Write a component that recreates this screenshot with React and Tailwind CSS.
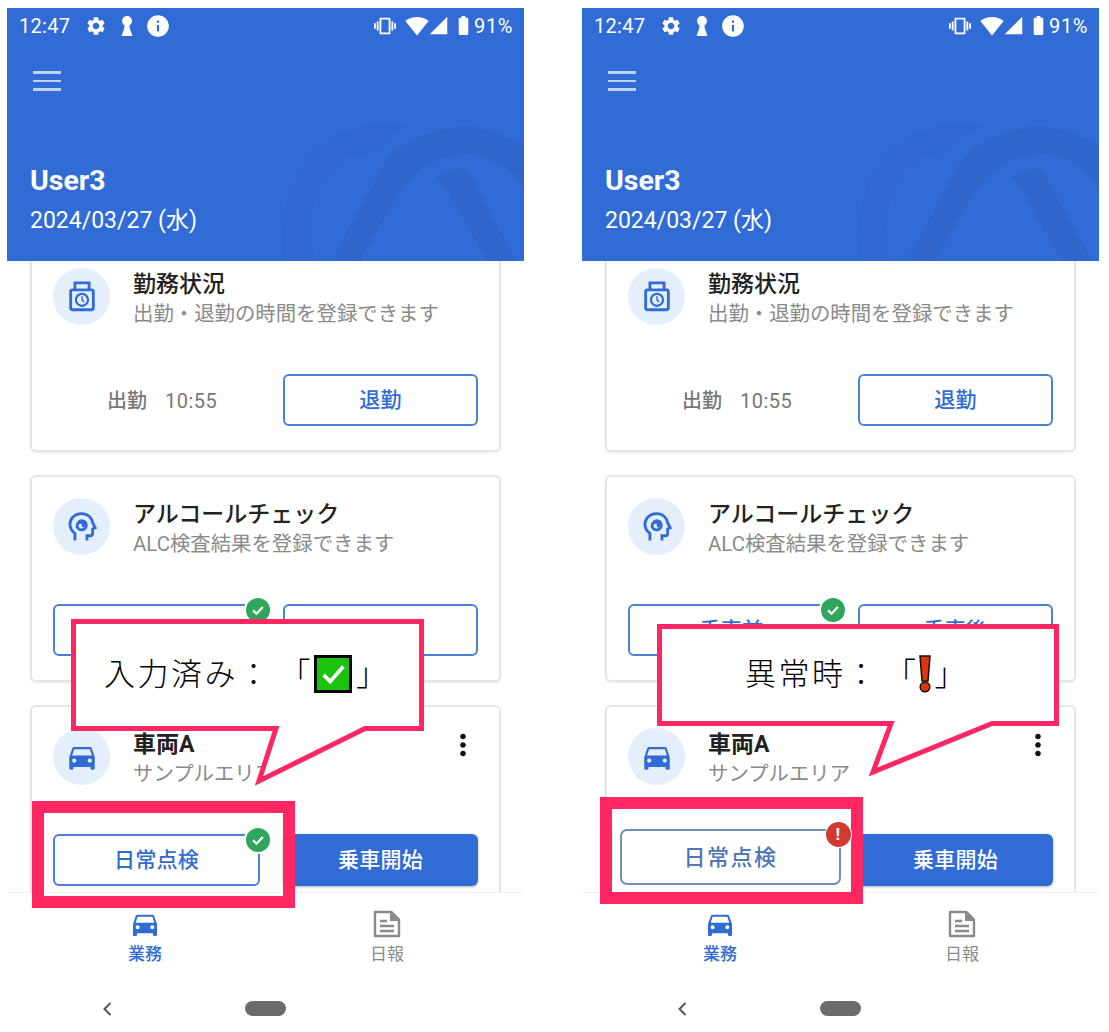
import {
  MdSettings,
  MdInfo,
  MdVibration,
  MdSignalWifi4Bar,
  MdSignalCellular4Bar,
  MdBatteryFull,
  MdDirectionsCar,
  MdMoreVert,
  MdOutlinePunchClock,
} from "react-icons/md";

const fontStack = "font-['Roboto','Noto_Sans_CJK_JP',sans-serif]";

const Keyhole = () => (
  <svg viewBox="0 0 12 22" className="w-[12px] h-[22px] fill-white">
    <circle cx="6" cy="6" r="5" />
    <path d="M4 8h4l1 6 2.5 7H.5L3 14z" />
  </svg>
);

const NoteIcon = () => (
  <svg viewBox="0 0 28 28" className="w-[28px] h-[28px]">
    <path d="M2 2h16l8 8v16H2z" fill="none" stroke="#8a8a8a" strokeWidth="2.4" strokeLinejoin="round" />
    <path d="M17 1h2l8 8v2H17z" fill="#8a8a8a" />
    <path d="M7 11h7M7 16h14M7 21h14" stroke="#8a8a8a" strokeWidth="2.4" />
  </svg>
);

const HeadIcon = () => (
  <svg viewBox="0 0 24 24" className="w-[34px] h-[34px] fill-none stroke-current stroke-[2]">
    <path d="M7 21.5v-5C5 15 3.5 12.5 3.5 10 3.5 5.5 7.5 2.5 11.5 2.5c4.5 0 7.5 3 8 6.5l1.8 3.5-1.8.8v3.2c0 1-.8 1.7-1.7 1.7h-2.3v3.3" />
    <path d="M9.5 8.5c2-1.8 5.5-.8 5.5 2.3s-4 4.2-5.7 2.2-.5-4.3 1.7-4.3 2.7 2.2 1 2.8" />
  </svg>
);

const Watermark = () => (
  <svg viewBox="0 0 517 253" className="absolute inset-0 w-[517px] h-[253px]">
    <path d="M277 253C268 200 292 122 367 117C380 116 392 117 401 119L383 128C372 139 365 146 358 146C318 150 296 190 308 253Z" fill="#3069d2" />
    <path d="M328 246L377 156C400 128 430 119 459 119C480 119 500 127 517 139V179C500 155 480 147 459 147C430 147 410 160 394 182L353 253H332Z" fill="#2e66cc" />
    <path d="M428 169C438 163 448 161 455 161C459 161 461 164 464 168L510 253H479L442 184Z" fill="#2e66cc" />
  </svg>
);

const IconCircle = ({ children }) => (
  <div className="w-[57px] h-[57px] rounded-full bg-[#e5effb] flex items-center justify-center shrink-0 text-[#316cd6]">
    {children}
  </div>
);

const Badge = () => (
  <div className="absolute -right-[14px] -top-[10px] w-[28px] h-[28px] rounded-full bg-white flex items-center justify-center">
    <div className="w-[24px] h-[24px] rounded-full bg-[#2fa65c] flex items-center justify-center">
      <svg viewBox="0 0 24 24" className="w-[18px] h-[18px] fill-none stroke-white stroke-[3]">
        <path d="M5.5 12.5l4.5 4.5 8.5-9" />
      </svg>
    </div>
  </div>
);

const OutlineButton = ({ label, checked, width }) => (
  <button className={`relative h-[52px] pt-[2px] ${width} rounded-[6px] border-2 border-[#4a7fdc] bg-white text-[#316cd6] text-[21px] font-medium tracking-[0.3px] flex items-center justify-center`}>
    {label}
    {checked && <Badge />}
  </button>
);

const Card = ({ icon, title, subtitle, more, children, boldTitle }) => (
  <div className="relative h-[207px] rounded-[6px] border-2 border-[#e6e6e6] bg-white pt-[21px] px-[21px] shadow-[0_1px_2px_rgba(0,0,0,0.08)]">
    <div className="flex">
      <IconCircle>{icon}</IconCircle>
      <div className="ml-[23px] pt-[2px]">
        <div className={`text-[23px] leading-[29px] text-[#222] ${boldTitle ? "font-bold text-[22px]" : "font-medium"}`}>{title}</div>
        <div className="text-[20.4px] leading-[30px] text-[#8a8a8a]">{subtitle}</div>
      </div>
      {more && (
        <div className="ml-auto mr-[-2px] mt-[0px] text-[#111]">
          <MdMoreVert className="w-[34px] h-[34px]" />
        </div>
      )}
    </div>
    <div className="flex gap-[23px] mt-[45px]">{children}</div>
  </div>
);

const StatusBar = () => (
  <div className="flex items-center h-[35px] pl-[12px] pr-[11px] text-white">
    <span className="text-[20px] tracking-[0.3px] w-[66px]">12:47</span>
    <MdSettings className="w-[22px] h-[22px]" />
    <div className="ml-[14px] flex"><Keyhole /></div>
    <MdInfo className="ml-[12px] w-[26px] h-[26px]" />
    <div className="ml-auto flex items-center">
      <MdVibration className="w-[22px] h-[22px]" />
      <MdSignalWifi4Bar className="ml-[9px] w-[24px] h-[24px]" />
      <MdSignalCellular4Bar className="ml-[-1px] w-[21px] h-[21px]" />
      <MdBatteryFull className="ml-[3px] w-[23px] h-[23px]" />
      <span className="ml-[-1px] text-[20px] tracking-[0.6px]">91%</span>
    </div>
  </div>
);

const Header = () => (
  <header className="relative h-[253px] bg-[#316cd6] overflow-hidden shrink-0">
    <Watermark />
    <div className="relative">
      <StatusBar />
      <div className="pl-[26px] pt-[28px] h-[120px]">
        <div className="flex flex-col gap-[6px] w-[28px]">
          <div className="h-[2.5px] bg-white/70" />
          <div className="h-[2.5px] bg-white/70" />
          <div className="h-[2.5px] bg-white/70" />
        </div>
      </div>
      <div className="pl-[23px] text-white">
        <div className="text-[28.5px] leading-[36px] font-bold">User3</div>
        <div className="text-[23px] leading-[30px] mt-[7px]">2024/03/27 (水)</div>
      </div>
    </div>
  </header>
);

const BottomNav = () => (
  <nav className="h-[93px] shrink-0 border-t border-[#f0f0f0] bg-white flex">
    <div className="w-[276px] flex flex-col items-center pt-[15px] text-[#316cd6]">
      <MdDirectionsCar className="w-[32px] h-[32px]" />
      <span className="text-[17px] leading-[24px] mt-[2px] font-medium">業務</span>
    </div>
    <div className="flex-1 flex flex-col items-center pt-[17px] pr-[33px] text-[#8a8a8a]">
      <NoteIcon />
      <span className="text-[17px] leading-[24px] mt-[4px]">日報</span>
    </div>
  </nav>
);

const SystemNav = () => (
  <div className="flex-1 relative flex items-start bg-white pt-[16px]">
    <svg viewBox="0 0 12 16" className="ml-[94px] mt-[0px] w-[12px] h-[16px] fill-none stroke-[#555] stroke-2">
      <path d="M9.5 2L3.5 8l6 6" />
    </svg>
    <div className="ml-[132px] w-[41px] h-[15px] rounded-full bg-[#6b6b6b]" />
  </div>
);

const Phone = ({ inspectLabel = "日常点検", children }) => (
  <div className="relative w-[517px] h-[1024px] flex flex-col">
    <Header />
    <main className="h-[631px] overflow-hidden bg-white px-[23px] shrink-0">
      <div className="-mt-[16px] flex flex-col gap-[23px]">
        <Card
          icon={<MdOutlinePunchClock className="w-[34px] h-[34px]" />}
          title="勤務状況"
          subtitle="出勤・退勤の時間を登録できます"
        >
          <div className="w-[207px] pl-[54px] pt-[2px] flex items-center text-[#777] text-[20px]">
            <span className="font-medium">出勤</span>
            <span className="ml-[18px] tracking-[0.5px]">10:55</span>
          </div>
          <OutlineButton label="退勤" width="w-[195px]" />
        </Card>
        <Card
          icon={<HeadIcon />}
          title="アルコールチェック"
          subtitle="ALC検査結果を登録できます"
        >
          <OutlineButton label="乗車前" width="w-[207px]" checked />
          <OutlineButton label="乗車後" width="w-[195px]" />
        </Card>
        <Card
          icon={<MdDirectionsCar className="w-[34px] h-[34px]" />}
          title="車両A"
          subtitle="サンプルエリア"
          more
          boldTitle
        >
          <OutlineButton label={inspectLabel} width="w-[207px]" checked />
          <button className="h-[52px] w-[195px] pt-[2px] rounded-[6px] bg-[#316cd6] text-white text-[21px] font-medium tracking-[0.3px] shadow-[0_1px_3px_rgba(0,0,0,0.3)]">
            乗車開始
          </button>
        </Card>
      </div>
    </main>
    <BottomNav />
    <SystemNav />
    {children}
  </div>
);

const Bubble = ({ points }) => (
  <svg viewBox="0 0 517 1024" className="absolute inset-0 w-[517px] h-[1024px] pointer-events-none">
    <polygon points={points} fill="#ffffff" stroke="#ff2762" strokeWidth="5" strokeMiterlimit="10" />
  </svg>
);

const CalloutText = ({ children, className }) => (
  <div className={`absolute flex items-center h-[40px] text-[31px] font-light leading-none text-black tracking-[2.5px] [text-spacing-trim:space-all] ${className}`}>
    {children}
  </div>
);

export default function App() {
  return (
    <div className={`w-[1109px] h-[1032px] overflow-hidden bg-white pl-[7px] pt-[8px] flex gap-[58px] ${fontStack}`}>
      <Phone>
        <Bubble points="66.5,613.5 414.5,613.5 414.5,720.5 358,720.5 252,773 269,720.5 66.5,720.5" />
        <CalloutText className="left-[97px] top-[646px]">
          <span>入力済み：</span>
          <span className="ml-[8px]">「</span>
          <span className="w-[38px] h-[38px] ml-[1px] bg-[#1bc30c] border-[3px] border-black flex items-center justify-center">
            <svg viewBox="0 0 32 32" className="w-[30px] h-[30px] fill-none stroke-white stroke-[4]">
              <path d="M6 17l7 7L27 8" />
            </svg>
          </span>
          <span className="ml-[4px] mt-[1px]">」</span>
        </CalloutText>
        <div className="absolute left-[25px] top-[793px] w-[263px] h-[107px] border-[12px] border-[#ff2762]" />
      </Phone>
      <Phone inspectLabel="">
        <Bubble points="77.5,618.5 474.5,618.5 474.5,715.5 410,715.5 291,764 309,715.5 77.5,715.5" />
        <CalloutText className="left-[163px] top-[646px]">
          <span>異常時：</span>
          <span className="ml-[6px]">「</span>
          <svg viewBox="0 0 12 38" className="w-[12px] h-[38px]">
            <path d="M1 1h10l-2 25H3z" fill="#e0360f" stroke="#111" strokeWidth="1.5" />
            <circle cx="6" cy="32" r="4.8" fill="#e0360f" stroke="#111" strokeWidth="1.5" />
          </svg>
          <span className="ml-[4px] mt-[1px]">」</span>
        </CalloutText>
        <div className="absolute left-[18px] top-[789px] w-[263px] h-[107px] border-[12px] border-[#ff2762] bg-white" />
        <div className="absolute left-[38px] top-[821px] w-[221px] h-[56px] rounded-[7px] border-2 border-[#6f8fbc] bg-white text-[#4d79b6] text-[22px] font-medium tracking-[1.5px] flex items-center justify-center">
          日常点検
          <div className="absolute -right-[13px] -top-[10px] w-[27px] h-[27px] rounded-full bg-white flex items-center justify-center">
            <div className="w-[25px] h-[25px] rounded-full bg-[#d2392f] text-white text-[17px] font-bold flex items-center justify-center leading-none">!</div>
          </div>
        </div>
      </Phone>
    </div>
  );
}
